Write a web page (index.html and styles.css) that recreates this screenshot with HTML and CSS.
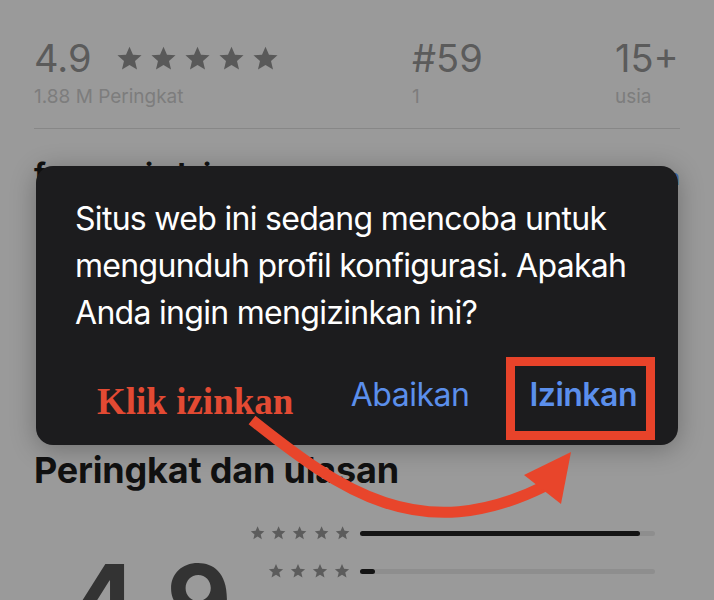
FILE: index.html
```html
<!DOCTYPE html>
<html lang="id">
<head>
  <meta charset="UTF-8" />
  <meta name="viewport" content="width=device-width, initial-scale=1.0"/>
  <title>Unduh Profil</title>
  <link rel="stylesheet" href="styles.css">
</head>
<body>

  <div class="page">
    <!-- Stats row -->
    <div class="stats">
      <div class="stat">
        <div class="stat-top">
          <span class="stat-value">4.9</span>
          <span class="stars-big">
            <svg viewBox="0 0 24 24"><path d="M12 1.5l3.1 7.1 7.6.6-5.8 5 1.8 7.5L12 17.7l-6.7 4 1.8-7.5-5.8-5 7.6-.6z"/></svg>
            <svg viewBox="0 0 24 24"><path d="M12 1.5l3.1 7.1 7.6.6-5.8 5 1.8 7.5L12 17.7l-6.7 4 1.8-7.5-5.8-5 7.6-.6z"/></svg>
            <svg viewBox="0 0 24 24"><path d="M12 1.5l3.1 7.1 7.6.6-5.8 5 1.8 7.5L12 17.7l-6.7 4 1.8-7.5-5.8-5 7.6-.6z"/></svg>
            <svg viewBox="0 0 24 24"><path d="M12 1.5l3.1 7.1 7.6.6-5.8 5 1.8 7.5L12 17.7l-6.7 4 1.8-7.5-5.8-5 7.6-.6z"/></svg>
            <svg viewBox="0 0 24 24"><path d="M12 1.5l3.1 7.1 7.6.6-5.8 5 1.8 7.5L12 17.7l-6.7 4 1.8-7.5-5.8-5 7.6-.6z"/></svg>
          </span>
        </div>
        <div class="stat-label">1.88 M Peringkat</div>
      </div>
      <div class="stat">
        <div class="stat-value">#59</div>
        <div class="stat-label">1</div>
      </div>
      <div class="stat">
        <div class="stat-value">15+</div>
        <div class="stat-label">usia</div>
      </div>
    </div>

    <!-- Section header (mostly under the alert) -->
    <div class="section">
      <div class="section-head">
        <h2>fanmania lain</h2>
        <a href="#">Lihat ulasan</a>
      </div>
    </div>

    <!-- Ratings -->
    <h2 class="ratings-title">Peringkat dan ulasan</h2>
    <div class="ratings">
      <div class="big-score">4.9</div>
      <div class="bars">
        <div class="bar-row">
          <span class="stars-small">
            <svg viewBox="0 0 24 24"><path d="M12 1.5l3.1 7.1 7.6.6-5.8 5 1.8 7.5L12 17.7l-6.7 4 1.8-7.5-5.8-5 7.6-.6z"/></svg>
            <svg viewBox="0 0 24 24"><path d="M12 1.5l3.1 7.1 7.6.6-5.8 5 1.8 7.5L12 17.7l-6.7 4 1.8-7.5-5.8-5 7.6-.6z"/></svg>
            <svg viewBox="0 0 24 24"><path d="M12 1.5l3.1 7.1 7.6.6-5.8 5 1.8 7.5L12 17.7l-6.7 4 1.8-7.5-5.8-5 7.6-.6z"/></svg>
            <svg viewBox="0 0 24 24"><path d="M12 1.5l3.1 7.1 7.6.6-5.8 5 1.8 7.5L12 17.7l-6.7 4 1.8-7.5-5.8-5 7.6-.6z"/></svg>
            <svg viewBox="0 0 24 24"><path d="M12 1.5l3.1 7.1 7.6.6-5.8 5 1.8 7.5L12 17.7l-6.7 4 1.8-7.5-5.8-5 7.6-.6z"/></svg>
          </span>
          <span class="track"><span class="fill" style="width: 95%"></span></span>
        </div>
        <div class="bar-row">
          <span class="stars-small">
            <svg viewBox="0 0 24 24"><path d="M12 1.5l3.1 7.1 7.6.6-5.8 5 1.8 7.5L12 17.7l-6.7 4 1.8-7.5-5.8-5 7.6-.6z"/></svg>
            <svg viewBox="0 0 24 24"><path d="M12 1.5l3.1 7.1 7.6.6-5.8 5 1.8 7.5L12 17.7l-6.7 4 1.8-7.5-5.8-5 7.6-.6z"/></svg>
            <svg viewBox="0 0 24 24"><path d="M12 1.5l3.1 7.1 7.6.6-5.8 5 1.8 7.5L12 17.7l-6.7 4 1.8-7.5-5.8-5 7.6-.6z"/></svg>
            <svg viewBox="0 0 24 24"><path d="M12 1.5l3.1 7.1 7.6.6-5.8 5 1.8 7.5L12 17.7l-6.7 4 1.8-7.5-5.8-5 7.6-.6z"/></svg>
          </span>
          <span class="track"><span class="fill" style="width: 5%"></span></span>
        </div>
      </div>
    </div>
  </div>

  <!-- Alert -->
  <div class="alert">
    <p class="alert-text">Situs web ini sedang mencoba untuk mengunduh profil konfigurasi. Apakah Anda ingin mengizinkan ini?</p>
    <div class="alert-actions">
      <span class="hint">Klik izinkan</span>
      <button class="alert-btn">Abaikan</button>
      <button class="alert-btn primary">Izinkan</button>
    </div>
  </div>

  <!-- Annotation arrow -->
  <svg class="arrow" width="714" height="600" viewBox="0 0 714 600">
    <path d="M252 420 C340 490 420 548 545 486" fill="none" stroke="#e8452b" stroke-width="11" stroke-linecap="butt"/>
    <polygon points="571,452 524,475 561,504" fill="#e8452b"/>
  </svg>

</body>
</html>
```

FILE: styles.css
```css
* { box-sizing: border-box; margin: 0; padding: 0; }

body {
  width: 714px;
  height: 600px;
  overflow: hidden;
  position: relative;
  background: #9a9a9a;
  font-family: "Inter", "Noto Sans", sans-serif;
}

.page {
  padding: 0 34px;
}

/* Stats row */
.stats {
  display: grid;
  grid-template-columns: 378px 203px 1fr;
  padding-top: 39px;
  padding-bottom: 20px;
  border-bottom: 1px solid #878787;
}

.stat-top {
  display: flex;
  align-items: center;
  gap: 24px;
}

.stat-value {
  font-size: 38px;
  line-height: 38px;
  color: #5b5b5b;
}

.stars-big {
  display: flex;
  gap: 7px;
}

.stars-big svg {
  width: 27px;
  height: 27px;
  fill: #595959;
}

.stat-label {
  margin-top: 9px;
  font-size: 19px;
  line-height: 22px;
  color: #7d7d7d;
}

/* Section behind the alert */
.section {
  padding-top: 27px;
  padding-bottom: 258px;
}

.section-head {
  display: flex;
  justify-content: space-between;
  align-items: baseline;
}

.section-head h2 {
  font-size: 30px;
  line-height: 36px;
  font-weight: 700;
  color: #111;
}

.section-head a {
  font-size: 22px;
  color: #3f67b5;
  text-decoration: none;
}

/* Ratings */
.ratings-title {
  font-size: 36px;
  line-height: 40px;
  font-weight: 700;
  letter-spacing: -0.2px;
  color: #111;
}

.ratings {
  display: grid;
  grid-template-columns: 1fr 405px;
  padding-right: 25px;
  margin-top: 33px;
}

.big-score {
  margin-top: 28px;
  padding-left: 36px;
  font-size: 100px;
  line-height: 100px;
  font-weight: 700;
  color: #333;
}

.bars {
  display: flex;
  flex-direction: column;
  gap: 18px;
}

.bar-row {
  display: flex;
  align-items: center;
  gap: 10px;
  height: 20px;
}

.stars-small {
  width: 100px;
  display: flex;
  justify-content: flex-end;
  gap: 6px;
}

.stars-small svg {
  width: 16px;
  height: 16px;
  fill: #5c5c5c;
}

.track {
  flex: 1;
  height: 5px;
  border-radius: 3px;
  background: #8e8e8e;
}

.fill {
  display: block;
  height: 100%;
  border-radius: 3px;
  background: #141414;
}

/* Alert */
.alert {
  position: absolute;
  left: 36px;
  top: 166px;
  width: 642px;
  padding: 29px 23px 5px 39px;
  background: #1c1c1e;
  border-radius: 17px;
  box-shadow: 0 4px 26px rgba(0, 0, 0, 0.28);
}

.alert-text {
  font-size: 32px;
  line-height: 47px;
  letter-spacing: -0.7px;
  color: #fff;
}

.alert-actions {
  display: flex;
  align-items: center;
  margin-top: 21px;
}

.hint {
  margin-left: 22px;
  margin-right: auto;
  margin-top: 6px;
  font-family: "Liberation Serif", "Times New Roman", serif;
  font-weight: 700;
  font-size: 37px;
  color: #e34a33;
}

.alert-btn {
  background: none;
  border: none;
  margin-bottom: 8px;
  font-family: inherit;
  font-size: 32px;
  letter-spacing: -0.5px;
  color: #5b8fec;
  cursor: pointer;
}

.alert-btn.primary {
  margin-left: 37px;
  margin-bottom: 0;
  height: 83px;
  padding: 0 9px 8px 14px;
  border: 9px solid #e8432a;
  font-weight: 600;
}

.arrow {
  position: absolute;
  left: 0;
  top: 0;
  pointer-events: none;
}
```
